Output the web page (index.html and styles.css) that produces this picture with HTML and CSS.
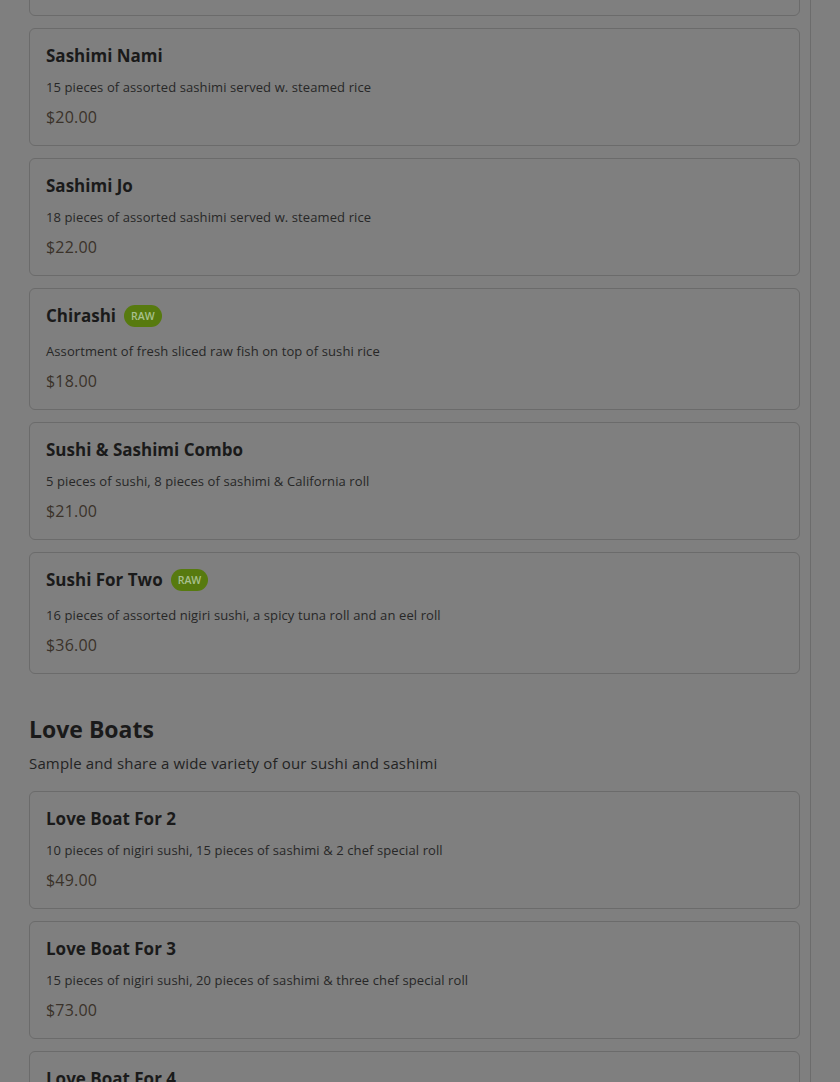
FILE: index.html
```html
<!DOCTYPE html>
<html lang="en">
<head>
<meta charset="utf-8">
<title>Menu</title>
<link rel="stylesheet" href="styles.css">
</head>
<body>
<div class="page">
  <main class="menu">
    <div class="list list-first">
      <article class="card">
        <h3 class="item-title">Sashimi Regular</h3>
        <p class="item-desc">12 pieces of assorted sashimi served w. steamed rice</p>
        <p class="item-price">$18.00</p>
      </article>
      <article class="card">
        <h3 class="item-title">Sashimi Nami</h3>
        <p class="item-desc">15 pieces of assorted sashimi served w. steamed rice</p>
        <p class="item-price">$20.00</p>
      </article>
      <article class="card">
        <h3 class="item-title">Sashimi Jo</h3>
        <p class="item-desc">18 pieces of assorted sashimi served w. steamed rice</p>
        <p class="item-price">$22.00</p>
      </article>
      <article class="card">
        <h3 class="item-title has-badge">Chirashi <span class="badge">RAW</span></h3>
        <p class="item-desc">Assortment of fresh sliced raw fish on top of sushi rice</p>
        <p class="item-price">$18.00</p>
      </article>
      <article class="card">
        <h3 class="item-title">Sushi &amp; Sashimi Combo</h3>
        <p class="item-desc">5 pieces of sushi, 8 pieces of sashimi &amp; California roll</p>
        <p class="item-price">$21.00</p>
      </article>
      <article class="card">
        <h3 class="item-title has-badge">Sushi For Two <span class="badge">RAW</span></h3>
        <p class="item-desc">16 pieces of assorted nigiri sushi, a spicy tuna roll and an eel roll</p>
        <p class="item-price">$36.00</p>
      </article>
    </div>

    <section class="section">
      <h2 class="section-title">Love Boats</h2>
      <p class="section-sub">Sample and share a wide variety of our sushi and sashimi</p>
      <div class="list">
        <article class="card">
          <h3 class="item-title">Love Boat For 2</h3>
          <p class="item-desc">10 pieces of nigiri sushi, 15 pieces of sashimi &amp; 2 chef special roll</p>
          <p class="item-price">$49.00</p>
        </article>
        <article class="card">
          <h3 class="item-title">Love Boat For 3</h3>
          <p class="item-desc">15 pieces of nigiri sushi, 20 pieces of sashimi &amp; three chef special roll</p>
          <p class="item-price">$73.00</p>
        </article>
        <article class="card">
          <h3 class="item-title">Love Boat For 4</h3>
          <p class="item-desc">20 pieces of nigiri sushi, 25 pieces of sashimi &amp; three chef special roll</p>
          <p class="item-price">$95.00</p>
        </article>
      </div>
    </section>
  </main>
  <aside class="side"></aside>
</div>
</body>
</html>
```

FILE: styles.css
```css
html, body {
  margin: 0;
  padding: 0;
  background: #7f7f7f;
  height: 100%;
  overflow: hidden;
}
body {
  font-family: "Open Sans", "Lato", sans-serif;
  color: #1b1b1b;
}
.page {
  display: flex;
  min-height: 100%;
}
.menu {
  width: 771px;
  padding: 0 10px 0 29px;
  border-right: 1px solid #6c6c6c;
  flex: none;
}
.side {
  flex: 1;
}
.list {
  display: flex;
  flex-direction: column;
  gap: 12px;
}
.list-first {
  margin-top: -102px;
}
.card {
  border: 1px solid #6b6b6b;
  border-radius: 6px;
  padding: 16px 16px 18px;
  background: #7f7f7f;
}
.item-title {
  margin: 0 0 10px;
  font-size: 17px;
  line-height: 22px;
  font-weight: 700;
  color: #1a1a1a;
  display: flex;
  align-items: center;
  gap: 8px;
}
.item-title.has-badge {
  margin-bottom: 14px;
}
.badge {
  display: inline-flex;
  align-items: center;
  justify-content: center;
  height: 22px;
  padding: 0 7px;
  border-radius: 11px;
  background: #577a0f;
  color: #a8c08e;
  font-size: 10.5px;
  font-weight: 600;
}
.item-desc {
  margin: 0 0 10px;
  font-size: 13px;
  line-height: 20px;
  color: #272727;
  letter-spacing: 0.1px;
}
.item-price {
  margin: 0;
  font-size: 16px;
  line-height: 20px;
  color: #3a322a;
  letter-spacing: 0.2px;
}
.section {
  margin-top: 40px;
}
.section-title {
  margin: 0 0 8px;
  font-size: 23px;
  line-height: 30px;
  font-weight: 700;
  color: #1a1a1a;
}
.section-sub {
  margin: 0 0 17px;
  font-size: 15px;
  line-height: 22px;
  color: #232323;
  letter-spacing: 0.15px;
}
```
